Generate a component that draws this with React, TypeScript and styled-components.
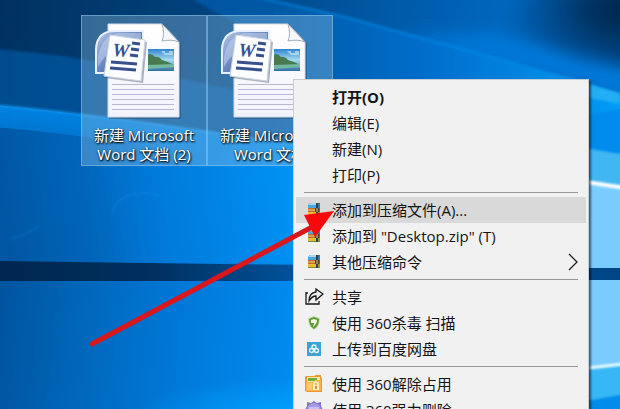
import React from "react";
import styled, { createGlobalStyle } from "styled-components";

const GlobalStyle = createGlobalStyle`
  * { box-sizing: border-box; }
  body { margin: 0; font-family: "Open Sans", "Noto Sans CJK SC", sans-serif; }
`;

const Desktop = styled.main`
  position: relative;
  height: 100vh;
  overflow: hidden;
  background: #0078dc;
`;

const Wallpaper = styled.svg`
  position: absolute;
  inset: 0;
  width: 100%;
  height: 100%;
`;

const FileGrid = styled.div`
  position: relative;
  display: flex;
  padding: 15px 81px;
`;

const FileTile = styled.button`
  display: flex;
  flex-direction: column;
  align-items: center;
  gap: 6px;
  flex: none;
  width: 126px;
  height: 151px;
  padding: 6px 4px 0;
  border: 1px solid rgba(150, 205, 240, 0.5);
  background: rgba(150, 195, 225, 0.36);
  color: #fff;
  font: inherit;
`;

const FileArt = styled.svg`
  flex: none;
  width: 108px;
  height: 98px;
`;

const FileName = styled.span`
  width: 116px;
  font-size: 15px;
  line-height: 19px;
  text-shadow: 1px 1px 2px #000, 0 1px 2px rgba(0, 0, 0, 0.7);
`;

const ContextMenu = styled.div`
  position: absolute;
  left: 293px;
  top: 79px;
  width: 296px;
  padding: 4px 2px;
  border: 1px solid #c8cdd2;
  background: #f1f1f1;
  box-shadow: 2px 2px 2px rgba(0, 0, 0, 0.55);
`;

const MenuItem = styled.button<{ $bold?: boolean; $active?: boolean }>`
  display: flex;
  align-items: center;
  width: 100%;
  height: 26px;
  padding: 0 8px 0 7px;
  border: 0;
  background: ${(p) => (p.$active ? "#d9d9d9" : "transparent")};
  color: #141414;
  font: inherit;
  font-size: 15px;
  font-weight: ${(p) => (p.$bold ? 700 : 400)};
  line-height: 26px;
  text-align: left;
  white-space: pre;
`;

const IconSlot = styled.span`
  display: flex;
  flex: none;
  align-items: center;
  justify-content: center;
  width: 22px;
  margin-right: 7px;
`;

const ItemLabel = styled.span`
  flex: 1;
`;

const Separator = styled.hr`
  height: 1px;
  margin: 4px 8px;
  border: 0;
  background: #989898;
`;

const ArrowOverlay = styled.svg`
  position: absolute;
  left: 0;
  top: 0;
  pointer-events: none;
`;

const Scene = () => (
  <Wallpaper viewBox="0 0 620 409" preserveAspectRatio="none" aria-hidden="true">
    <defs>
      <linearGradient id="sky" x1="0" y1="0" x2="1" y2="0.12">
        <stop offset="0" stopColor="#003260" />
        <stop offset="0.3" stopColor="#00407a" />
        <stop offset="0.6" stopColor="#0058a4" />
        <stop offset="0.8" stopColor="#0066bd" />
        <stop offset="1" stopColor="#00407c" />
      </linearGradient>
      <linearGradient id="mid" gradientUnits="userSpaceOnUse" x1="0" y1="0" x2="620" y2="0">
        <stop offset="0" stopColor="#004c8e" />
        <stop offset="0.45" stopColor="#005aa6" />
        <stop offset="0.7" stopColor="#006fce" />
        <stop offset="1" stopColor="#009cf6" />
      </linearGradient>
      <linearGradient id="low" gradientUnits="userSpaceOnUse" x1="0" y1="220" x2="300" y2="180">
        <stop offset="0" stopColor="#0056a2" />
        <stop offset="0.3" stopColor="#0066ba" />
        <stop offset="0.5" stopColor="#0078d8" />
        <stop offset="1" stopColor="#0094f6" />
      </linearGradient>
      <linearGradient id="floor" gradientUnits="userSpaceOnUse" x1="0" y1="290" x2="300" y2="320">
        <stop offset="0" stopColor="#00549e" />
        <stop offset="0.3" stopColor="#0068bc" />
        <stop offset="0.6" stopColor="#0078d8" />
        <stop offset="1" stopColor="#008cf0" />
      </linearGradient>
      <linearGradient id="bar" x1="0" y1="0" x2="1" y2="0">
        <stop offset="0" stopColor="#00264e" />
        <stop offset="0.25" stopColor="#00305f" />
        <stop offset="0.47" stopColor="#00509a" />
        <stop offset="1" stopColor="#004686" />
      </linearGradient>
      <linearGradient id="shine" x1="0" y1="0" x2="0" y2="1">
        <stop offset="0" stopColor="#0088ea" stopOpacity="0.9" />
        <stop offset="1" stopColor="#0088ea" stopOpacity="0" />
      </linearGradient>
      <radialGradient id="corner">
        <stop offset="0" stopColor="#00264c" />
        <stop offset="0.35" stopColor="#003260" stopOpacity="0.9" />
        <stop offset="1" stopColor="#004a8c" stopOpacity="0" />
      </radialGradient>
      <radialGradient id="glow">
        <stop offset="0" stopColor="#00a4ff" />
        <stop offset="1" stopColor="#00a4ff" stopOpacity="0" />
      </radialGradient>
      <filter id="soft" x="-20%" y="-50%" width="140%" height="200%">
        <feGaussianBlur stdDeviation="1.2" />
      </filter>
      <filter id="wide" x="-30%" y="-50%" width="160%" height="200%">
        <feGaussianBlur stdDeviation="8" />
      </filter>
    </defs>
    <rect width="620" height="409" fill="url(#sky)" />
    <path d="M400 36L500 34L640 68V120L590 90Z" fill="#0078d8" filter="url(#wide)" />
    <ellipse cx="625" cy="10" rx="110" ry="66" fill="url(#corner)" />
    <path d="M-5 49Q80 56 150 72L340 112V170H-5Z" fill="url(#mid)" filter="url(#soft)" />
    <path d="M235 -8L345 17L590 84L625 98V200H300V60L180 -8Z" fill="url(#mid)" filter="url(#soft)" />
    <path d="M235 -8L345 17L590 84L620 98" fill="none" stroke="#0090ee" strokeOpacity="0.45" strokeWidth="3" filter="url(#soft)" />
    <path d="M-5 105Q120 117 300 146V265H-5Z" fill="url(#low)" filter="url(#soft)" />
    <path d="M-5 105Q120 117 300 146V175Q120 137 -5 127Z" fill="url(#shine)" />
    <path d="M-5 105Q120 117 300 146" fill="none" stroke="#20a0f4" strokeOpacity="0.65" strokeWidth="2" filter="url(#soft)" />
    <path d="M112 212Q118 197 134 194T160 196" fill="none" stroke="#1690e8" strokeOpacity="0.35" strokeWidth="2" filter="url(#soft)" />
    <path d="M10 239Q30 234 40 225" fill="none" stroke="#1678c8" strokeOpacity="0.4" strokeWidth="2" filter="url(#soft)" />
    <rect y="281" width="620" height="128" fill="url(#floor)" />
    <ellipse cx="290" cy="412" rx="150" ry="34" fill="url(#glow)" opacity="0.8" />
    <path d="M580 82L620 93V104L580 96Z" fill="#22adf4" filter="url(#soft)" />
    <path d="M580 116L625 108V155L580 150Z" fill="#008cec" filter="url(#soft)" />
    <path d="M580 147L625 155V190H580Z" fill="#41b6f3" filter="url(#soft)" />
    <path d="M580 181L625 187V365L580 369Z" fill="#7accff" />
    <path d="M580 181L625 188" stroke="#fff" strokeWidth="4" filter="url(#soft)" />
    <path d="M580 369L625 364V402L580 408Z" fill="#37b7f6" />
    <path d="M580 369L625 364" stroke="#ebffff" strokeWidth="3" filter="url(#soft)" />
    <path d="M580 402L625 394V415H580Z" fill="#008ceb" filter="url(#soft)" />
    <path d="M-5 261L300 265L588 268H625V280H588L300 281H-5Z" fill="url(#bar)" />
  </Wallpaper>
);

const WordDocument = () => (
  <FileArt viewBox="0 0 108 98" aria-hidden="true">
    <defs>
      <linearGradient id="paper" x1="0" y1="0" x2="0" y2="1">
        <stop offset="0" stopColor="#fff" />
        <stop offset="1" stopColor="#f1f2fc" />
      </linearGradient>
      <linearGradient id="frame" x1="0" y1="0" x2="1" y2="1">
        <stop offset="0" stopColor="#b5c8e8" />
        <stop offset="0.5" stopColor="#6784bd" />
        <stop offset="1" stopColor="#3d5c9c" />
      </linearGradient>
      <linearGradient id="photo" x1="0" y1="0" x2="0" y2="1">
        <stop offset="0" stopColor="#2e83d0" />
        <stop offset="0.5" stopColor="#a5dbef" />
        <stop offset="1" stopColor="#2c6fa2" />
      </linearGradient>
    </defs>
    <path d="M19 3H72L91 21V97H19Z" fill="#26496d" opacity="0.45" />
    <path d="M18 2H72L89 20V95H18Z" fill="url(#paper)" stroke="#d5dae6" />
    <path d="M72 2Q75 12 72 19Q82 17 89 20Z" fill="#f6f7fb" stroke="#a4abb8" />
    <path d="M22 62.500H84M22 67.500H84M22 72.500H84M22 77.500H84M22 82.500H84M22 87.500H84" stroke="#b8b8d1" />
    <path d="M58 27H84V49H58Z" fill="url(#photo)" />
    <path d="M71 29h4v2h4v-2h4v4h-8z" fill="#d7eff8" opacity="0.6" />
    <path d="M58 33Q61 30 65 35Q69 34 72 38Q79 40 84 43L58 44Z" fill="#477a4e" />
    <path d="M58 43L84 42V45L58 47Z" fill="#74b8a0" />
    <path d="M6 51V27Q7 9 25 9H53V51Z" fill="url(#frame)" stroke="#e8f0ff" strokeWidth="2" />
    <path d="M8 36Q11 14 29 11H51V20Q20 22 8 45Z" fill="#c3d4ee" opacity="0.55" />
    <path d="M21 15L57 20L53 61L15 56Z" fill="#344566" opacity="0.4" />
    <path d="M20 13L55 18L51 59L14 54Z" fill="#fcfdff" stroke="#cdd3df" />
    <text x="22" y="34" transform="rotate(4 22 34)" fill="#36508f" fontFamily="Liberation Serif" fontWeight="700" fontStyle="italic" fontSize="19">W</text>
    <path d="M42 21L50 22M41 27L49 28M40 33L48 34M21 40L47 42M20 46L46 48" stroke="#36508f" strokeWidth="3" />
  </FileArt>
);

const ArchiveIcon = () => (
  <svg width="14" height="14" viewBox="0 0 14 14" aria-hidden="true">
    <path d="M1 2L3 0H13V13H1Z" fill="#6d6a3c" />
    <path d="M1 2L3 0H9V5H1Z" fill="#4ea6e0" />
    <path d="M1 2L3 0H9V2Z" fill="#a5d8f2" />
    <path d="M1 5H9V9H1Z" fill="#c8642e" />
    <path d="M1 6H9V8H1Z" fill="#d9a24e" />
    <path d="M1 9H9V13H1Z" fill="#e6bc3a" />
    <path d="M1 12H13V13H1Z" fill="#7f8a34" />
    <path d="M9 0H11V13H9Z" fill="#2d4150" />
    <path d="M11 1H13V5H11Z" fill="#3c7ba6" />
    <path d="M11 9H13V12H11Z" fill="#8a9c3c" />
    <path d="M8 5H12V9H8Z" fill="#4b4231" />
    <path d="M10 5V9" stroke="#e6c874" />
  </svg>
);

const ShareIcon = () => (
  <svg width="20" height="20" viewBox="0 0 20 20" fill="none" stroke="#171717" strokeWidth="1.3" aria-hidden="true">
    <path d="M4 6H2V17H15V14" />
    <path d="M12 2L19 7L12 13V9Q8 9 5 14Q5 6 12 5Z" />
  </svg>
);

const ShieldIcon = () => (
  <svg width="14" height="14" viewBox="0 0 14 14" aria-hidden="true">
    <path d="M7 0L13 2Q13 11 7 14Q1 11 1 2Z" fill="#c5dfb0" />
    <path d="M7 1L12 3Q12 10 7 13Q2 10 2 3Z" fill="#5c9a34" />
    <path d="M7 3L10 4Q10 8 6 11L7 7L4 7V4Z" fill="#f0f6dc" />
  </svg>
);

const CloudDriveIcon = () => (
  <svg width="14" height="14" viewBox="0 0 14 14" aria-hidden="true">
    <path d="M0 0H14V14H0Z" fill="#3aa4d7" />
    <g fill="none" stroke="#e9f9ff" strokeWidth="1.3">
      <circle cx="7" cy="5" r="2" />
      <circle cx="4.5" cy="8.5" r="2" />
      <circle cx="9.5" cy="8.5" r="2" />
    </g>
  </svg>
);

const UnlockFolderIcon = () => (
  <svg width="20" height="20" viewBox="0 0 20 20" aria-hidden="true">
    <path d="M2 2H10L12 1H17V3L18 4V18H3L1 17V3Z" fill="#ed982f" />
    <path d="M3 3H16V9H3Z" fill="#f3e9a0" />
    <path d="M4 4H13V7H4Z" fill="#70ad36" />
    <path d="M2 8H9L11 6H17V17H2Z" fill="#fbb548" />
    <path d="M3 9H8V16H3Z" fill="#ffe0a0" opacity="0.5" />
    <path d="M9 11H15V16H9Z" fill="#fff1cc" />
    <path d="M10 11V9Q12 7 14 9V11" fill="none" stroke="#fff5dc" strokeWidth="1.5" />
    <path d="M12 12V15" stroke="#dc8f30" strokeWidth="2" />
  </svg>
);

const ShredderIcon = () => (
  <svg width="20" height="20" viewBox="0 0 20 20" aria-hidden="true">
    <path d="M3 2L7 3L10 1L13 3L17 2L17 6L19 10L17 13L17 18L13 17L10 19L7 17L3 18L3 13L1 10L3 6Z" fill="#8571cd" />
    <circle cx="10" cy="10" r="7" fill="#a799e7" />
    <path d="M5 8H15M6 12H14" stroke="#c9c0f4" strokeWidth="2" />
  </svg>
);

const Chevron = () => (
  <svg width="10" height="18" viewBox="0 0 10 18" fill="none" stroke="#222" strokeWidth="1.3" aria-hidden="true">
    <path d="M1 1L9 9L1 17" />
  </svg>
);

type Entry = { label: string; icon?: React.ReactNode; bold?: boolean; active?: boolean; submenu?: boolean };

const groups: Entry[][] = [
  [{ label: "打开(O)", bold: true }, { label: "编辑(E)" }, { label: "新建(N)" }, { label: "打印(P)" }],
  [
    { label: "添加到压缩文件(A)...", icon: <ArchiveIcon />, active: true },
    { label: '添加到 "Desktop.zip" (T)', icon: <ArchiveIcon /> },
    { label: "其他压缩命令", icon: <ArchiveIcon />, submenu: true },
  ],
  [
    { label: "共享", icon: <ShareIcon /> },
    { label: "使用 360杀毒 扫描", icon: <ShieldIcon /> },
    { label: "上传到百度网盘", icon: <CloudDriveIcon /> },
  ],
  [
    { label: "使用 360解除占用", icon: <UnlockFolderIcon /> },
    { label: "使用 360强力删除", icon: <ShredderIcon /> },
  ],
];

const files = ["新建 Microsoft Word 文档 (2)", "新建 Microsoft Word 文档"];

export default function App() {
  return (
    <>
      <GlobalStyle />
      <Desktop>
        <Scene />
        <FileGrid>
          {files.map((name) => (
            <FileTile key={name}>
              <WordDocument />
              <FileName>{name}</FileName>
            </FileTile>
          ))}
        </FileGrid>
        <ContextMenu role="menu">
          {groups.map((group, index) => (
            <React.Fragment key={index}>
              {index > 0 && <Separator />}
              {group.map((entry) => (
                <MenuItem key={entry.label} role="menuitem" $bold={entry.bold} $active={entry.active}>
                  <IconSlot>{entry.icon}</IconSlot>
                  <ItemLabel>{entry.label}</ItemLabel>
                  {entry.submenu && <Chevron />}
                </MenuItem>
              ))}
            </React.Fragment>
          ))}
        </ContextMenu>
        <ArrowOverlay width="340" height="350" viewBox="0 0 340 350" aria-hidden="true">
          <path d="M92 344L314 226" stroke="#d9171c" strokeWidth="5" strokeLinecap="round" />
          <path d="M334 211L304 215L315 237Z" fill="#f8080b" />
        </ArrowOverlay>
      </Desktop>
    </>
  );
}
